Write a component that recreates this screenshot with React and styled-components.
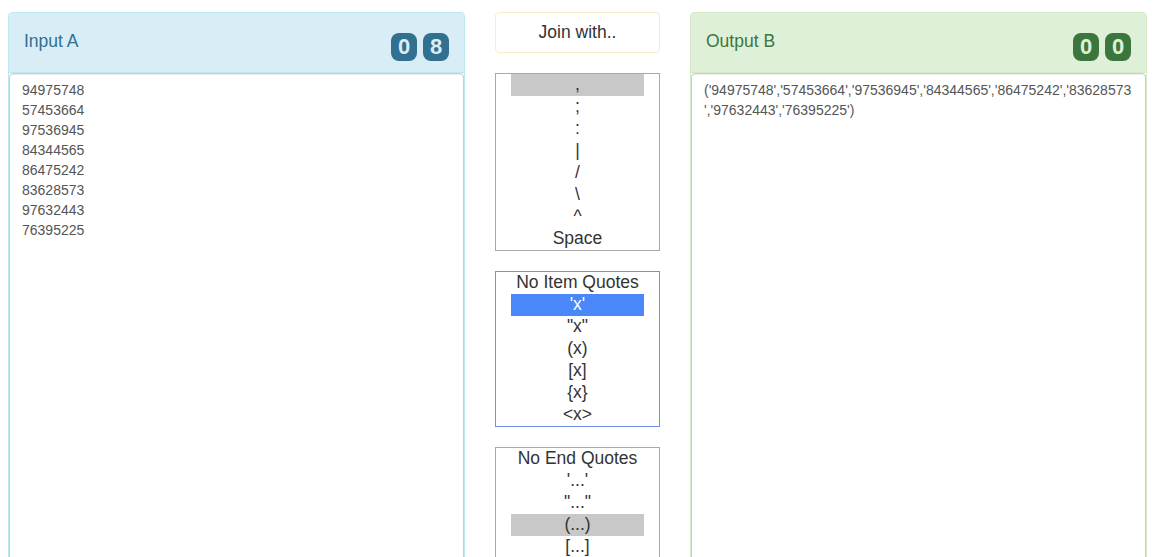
import React from "react";
import styled, { createGlobalStyle, css } from "styled-components";

const GlobalStyle = createGlobalStyle`
  html, body {
    margin: 0;
    padding: 0;
    height: 557px;
    overflow: hidden;
    background: #fff;
    color: #333;
    font-family: "Liberation Sans", Arial, Helvetica, sans-serif;
  }
  * { box-sizing: border-box; }
`;

const variants = {
  info: { bg: "#d9edf7", border: "#bce8f1", text: "#31708f" },
  success: { bg: "#dff0d8", border: "#d6e9c6", text: "#3c763d" },
};

const Page = styled.div`
  display: grid;
  grid-template-columns: 457px 165px 457px;
  column-gap: 30px;
  align-items: start;
  padding: 12px 15px 0 8px;
  height: 557px;
  overflow: hidden;
`;

const Panel = styled.section`
  display: flex;
  flex-direction: column;
  height: 620px;
  border: 1px solid ${(p) => variants[p.$variant].border};
  border-radius: 4px;
  background: #fff;
`;

const PanelHeading = styled.header`
  display: flex;
  justify-content: space-between;
  align-items: flex-start;
  height: 60px;
  padding: 0 15px;
  background: ${(p) => variants[p.$variant].bg};
  color: ${(p) => variants[p.$variant].text};
  border-bottom: 1px solid ${(p) => variants[p.$variant].border};
  border-radius: 3px 3px 0 0;
`;

const PanelTitle = styled.h3`
  margin: 18px 0 0;
  font-size: 17.5px;
  font-weight: normal;
  line-height: 20px;
`;

const Badges = styled.div`
  display: flex;
  gap: 6px;
  margin-top: 20px;
`;

const Badge = styled.span`
  display: block;
  width: 26px;
  height: 28px;
  border-radius: 8px;
  text-align: center;
  font-size: 22px;
  font-weight: bold;
  line-height: 28px;
  background: ${(p) => variants[p.$variant].text};
  color: ${(p) => variants[p.$variant].bg};
`;

const TextBox = styled.textarea`
  flex: 1;
  display: block;
  width: 100%;
  margin: 0;
  padding: 6px 13px 6px 12px;
  border: 1px solid #ccc;
  border-radius: 4px;
  box-shadow: inset 0 1px 1px rgba(0, 0, 0, 0.075);
  font-family: "Liberation Sans", Arial, Helvetica, sans-serif;
  font-size: 14px;
  line-height: 20px;
  color: #555;
  resize: none;
  outline: none;
  overflow: hidden;
`;

const MiddleColumn = styled.div`
  display: flex;
  flex-direction: column;
  gap: 20px;
`;

const JoinBox = styled.div`
  height: 41px;
  border: 1px solid #faebcc;
  border-radius: 4px;
  text-align: center;
  font-size: 17.5px;
  line-height: 39px;
  color: #333;
`;

const ListBox = styled.ul`
  list-style: none;
  margin: 0;
  padding: 0 15px;
  border: 1px solid ${(p) => (p.$focused ? "#7090ee" : "#a9a9a9")};
  background: #fff;
`;

const Option = styled.li`
  height: 22px;
  line-height: 21px;
  text-align: center;
  font-size: 17.5px;
  color: #333;
  white-space: nowrap;
  ${(p) =>
    p.$selected === "gray" &&
    css`
      background: #c8c8c8;
    `}
  ${(p) =>
    p.$selected === "blue" &&
    css`
      background: #4a87f8;
      color: #fff;
    `}
`;

const inputLines = [
  "94975748",
  "57453664",
  "97536945",
  "84344565",
  "86475242",
  "83628573",
  "97632443",
  "76395225",
];

const outputText =
  "(" + inputLines.map((n) => `'${n}'`).join(",") + ")";

const joinOptions = [",", ";", ":", "|", "/", "\\", "^", "Space"];
const itemQuoteOptions = ["No Item Quotes", "'x'", '"x"', "(x)", "[x]", "{x}", "<x>"];
const endQuoteOptions = ["No End Quotes", "'...'", '"..."', "(...)", "[...]", "{...}", "<...>"];

function CountPanel({ variant, title, count, value }) {
  return (
    <Panel $variant={variant}>
      <PanelHeading $variant={variant}>
        <PanelTitle>{title}</PanelTitle>
        <Badges>
          {count.split("").map((d, i) => (
            <Badge key={i} $variant={variant}>
              {d}
            </Badge>
          ))}
        </Badges>
      </PanelHeading>
      <TextBox value={value} readOnly spellCheck={false} />
    </Panel>
  );
}

function List({ options, selected, color, focused }) {
  return (
    <ListBox $focused={focused}>
      {options.map((o, i) => (
        <Option key={o} $selected={i === selected ? color : undefined}>
          {o}
        </Option>
      ))}
    </ListBox>
  );
}

export default function App() {
  return (
    <>
      <GlobalStyle />
      <Page>
        <CountPanel
          variant="info"
          title="Input A"
          count="08"
          value={inputLines.join("\n")}
        />
        <MiddleColumn>
          <JoinBox>Join with..</JoinBox>
          <List options={joinOptions} selected={0} color="gray" />
          <List options={itemQuoteOptions} selected={1} color="blue" focused />
          <List options={endQuoteOptions} selected={3} color="gray" />
        </MiddleColumn>
        <CountPanel
          variant="success"
          title="Output B"
          count="00"
          value={outputText}
        />
      </Page>
    </>
  );
}
